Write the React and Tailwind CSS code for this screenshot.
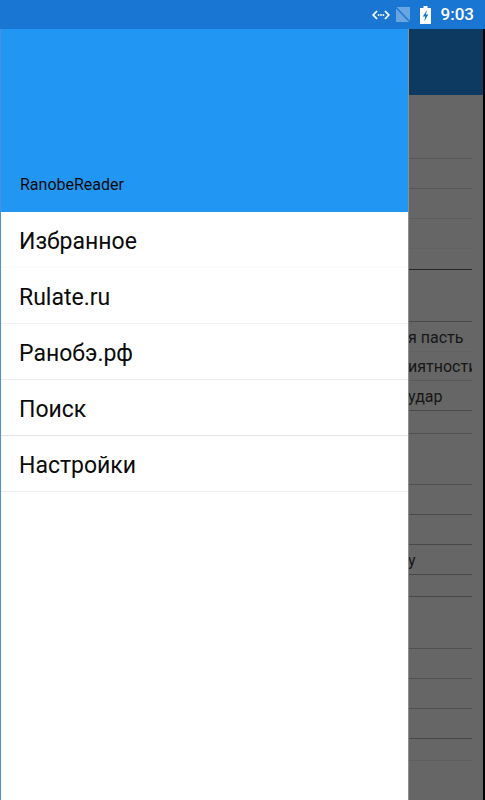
const rows = [
  { h: 30, border: "border-[#565656]" },
  { h: 30, border: "border-[#585858]" },
  { h: 30, border: "border-[#5c5c5c]" },
  { h: 30, border: "border-[#626262]" },
  { h: 21, border: "border-[#262626]" },
  { h: 52, border: "border-[#4a4a4a]" },
  { h: 30, border: "border-[#626262]", text: "я пасть" },
  { h: 29, border: "border-[#5a5a5a]", text: "иятности" },
  { h: 30, border: "border-[#4a4a4a]", text: "удар" },
  { h: 23, border: "border-[#505050]" },
  { h: 51, border: "border-[#505050]" },
  { h: 30, border: "border-[#4a4a4a]" },
  { h: 30, border: "border-[#484848]" },
  { h: 30, border: "border-[#484848]", text: "у" },
  { h: 22, border: "border-[#484848]" },
  { h: 52, border: "border-[#505050]" },
  { h: 30, border: "border-[#505050]" },
  { h: 30, border: "border-[#505050]" },
  { h: 30, border: "border-[#484848]" },
  { h: 22, border: "border-[#5e5e5e]" },
];

const menu = [
  { label: "Избранное", border: "border-[#fafafa]" },
  { label: "Rulate.ru", border: "border-[#f2f2f2]" },
  { label: "Ранобэ.рф", border: "border-[#ececec]" },
  { label: "Поиск", border: "border-[#e2e2e2]" },
  { label: "Настройки", border: "border-[#eeeeee]" },
];

function StatusIcons() {
  return (
    <div className="flex items-center">
      <svg width="18" height="12" viewBox="0 0 18 12" fill="none" stroke="#ffffff" strokeWidth="1.8" className="mr-[5px]">
        <path d="M5 2 L1.2 6 L5 10" />
        <path d="M13 2 L16.8 6 L13 10" />
        <circle cx="6.6" cy="6" r="0.9" fill="#ffffff" stroke="none" />
        <circle cx="9" cy="6" r="0.9" fill="#ffffff" stroke="none" />
        <circle cx="11.4" cy="6" r="0.9" fill="#ffffff" stroke="none" />
      </svg>
      <svg width="16" height="17" viewBox="0 0 16 17" className="mr-[9px]">
        <path d="M1 1 H15 V16 H1 Z" fill="#ffffff" fillOpacity="0.35" />
        <path d="M0.5 1 L15.5 16.5" stroke="#1976d2" strokeWidth="1.4" />
      </svg>
      <svg width="11" height="18" viewBox="0 0 11 18" className="mr-[10px]">
        <path d="M3.5 0 H7.5 V2 H11 V18 H0 V2 H3.5 Z" fill="#ffffff" />
        <path d="M7 4 L2.8 10.5 H5.2 L4.2 15.5 L8.4 8.6 H5.9 Z" fill="#1976d2" />
      </svg>
    </div>
  );
}

export default function App() {
  return (
    <div className="relative w-[485px] h-[800px] overflow-hidden bg-black font-['Roboto',sans-serif]">
      <div className="flex h-[29px] items-center justify-end bg-[#1976d2] pr-[11px]">
        <StatusIcons />
        <span className="text-[17px] font-medium leading-none text-white">9:03</span>
      </div>

      <div className="mr-[2px] h-[771px] bg-[#666666]">
        <div className="h-[66px] bg-[#0d3a60]" />
        <div className="w-[472px] overflow-hidden pt-[34px]">
          {rows.map((row, i) => (
            <div
              key={i}
              style={{ height: row.h }}
              className={`flex items-center overflow-hidden whitespace-nowrap border-b pl-[408px] pt-[2px] text-[16px] text-[#161616] ${row.border}`}
            >
              {row.text}
            </div>
          ))}
        </div>
      </div>

      <div className="absolute left-0 top-[29px] bottom-0 w-[409px] border-r border-[#8f8f8f] border-l border-l-[#4a90e2] bg-white">
        <div className="flex h-[183px] items-end bg-[#2196f3] pb-[18px] pl-[19px] text-[16px] leading-[18px] text-[#0a0a0a]">
          RanobeReader
        </div>
        <div>
          {menu.map((item) => (
            <div
              key={item.label}
              className={`flex h-[56px] items-center border-b pl-[18px] pt-[3px] text-[23px] leading-none text-[#0a0a0a] ${item.border}`}
            >
              {item.label}
            </div>
          ))}
        </div>
      </div>
    </div>
  );
}
